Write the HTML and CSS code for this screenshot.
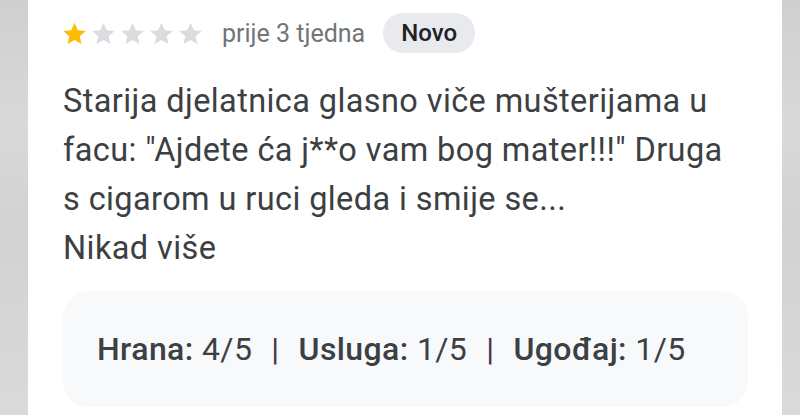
FILE: index.html
```html
<!DOCTYPE html>
<html lang="hr">
  <head>
    <meta charset="utf-8">
    <title>Recenzija</title>
    <meta name="viewport" content="width=device-width, initial-scale=1.0">
    <link rel="stylesheet" href="styles.css">
  </head>
  <body>
    <div class="card">
      <div class="review__head">
        <div class="stars">
          <svg class="star star--on" viewBox="0 0 24 24"><path d="M12 2.5l2.9 6.6 7.1.6-5.4 4.7 1.6 7-6.2-3.7-6.2 3.7 1.6-7L2 9.7l7.1-.6z"/></svg>
          <svg class="star" viewBox="0 0 24 24"><path d="M12 2.5l2.9 6.6 7.1.6-5.4 4.7 1.6 7-6.2-3.7-6.2 3.7 1.6-7L2 9.7l7.1-.6z"/></svg>
          <svg class="star" viewBox="0 0 24 24"><path d="M12 2.5l2.9 6.6 7.1.6-5.4 4.7 1.6 7-6.2-3.7-6.2 3.7 1.6-7L2 9.7l7.1-.6z"/></svg>
          <svg class="star" viewBox="0 0 24 24"><path d="M12 2.5l2.9 6.6 7.1.6-5.4 4.7 1.6 7-6.2-3.7-6.2 3.7 1.6-7L2 9.7l7.1-.6z"/></svg>
          <svg class="star" viewBox="0 0 24 24"><path d="M12 2.5l2.9 6.6 7.1.6-5.4 4.7 1.6 7-6.2-3.7-6.2 3.7 1.6-7L2 9.7l7.1-.6z"/></svg>
        </div>
        <span class="review__date">prije 3 tjedna</span>
        <span class="badge">Novo</span>
      </div>

      <p class="review__text">Starija djelatnica glasno viče mušterijama u<br>facu: "Ajdete ća j**o vam bog mater!!!" Druga<br>s cigarom u ruci gleda i smije se...<br>Nikad više</p>

      <div class="ratings">
        <span><b>Hrana:</b> 4/5</span>
        <span class="sep">|</span>
        <span><b>Usluga:</b> 1/5</span>
        <span class="sep">|</span>
        <span><b>Ugođaj:</b> 1/5</span>
      </div>
    </div>
  </body>
</html>
```

FILE: styles.css
```css
html, body {
  margin: 0;
  padding: 0;
}

body {
  height: 415px;
  overflow: hidden;
  background: linear-gradient(180deg, #cfcfcf 0%, #d9d9d9 30%, #d2d2d2 55%, #dadada 100%);
  font-family: Roboto, "Noto Sans", Arial, sans-serif;
  color: #3c4043;
}

.card {
  margin: 0 18px 0 28px;
  height: 415px;
  background: #fff;
  padding: 13px 34px 0 35px;
  box-sizing: border-box;
}

.review__head {
  display: flex;
  align-items: center;
  height: 40px;
}

.stars {
  display: flex;
  gap: 2px;
  margin-left: -2px;
  margin-right: 18px;
}

.star {
  width: 27px;
  height: 27px;
  fill: #dadce0;
}

.star--on {
  fill: #fbbc04;
}

.review__date {
  font-size: 25px;
  color: #70757a;
}

.badge {
  margin-left: 18px;
  padding: 0 18px;
  height: 40px;
  line-height: 40px;
  border-radius: 20px;
  background: #e8eaed;
  font-size: 24px;
  font-weight: 500;
  color: #202124;
}

.review__text {
  margin: 24px 0 18px;
  font-size: 32.5px;
  line-height: 49px;
  letter-spacing: 0.4px;
  color: #3c4043;
}

.ratings {
  display: flex;
  align-items: center;
  gap: 19px;
  height: 116px;
  padding: 0 34px;
  border-radius: 26px;
  background: #f8f9fa;
  font-size: 32px;
  letter-spacing: 0.4px;
  color: #3c4043;
}

.ratings b {
  font-weight: 500;
}
```
